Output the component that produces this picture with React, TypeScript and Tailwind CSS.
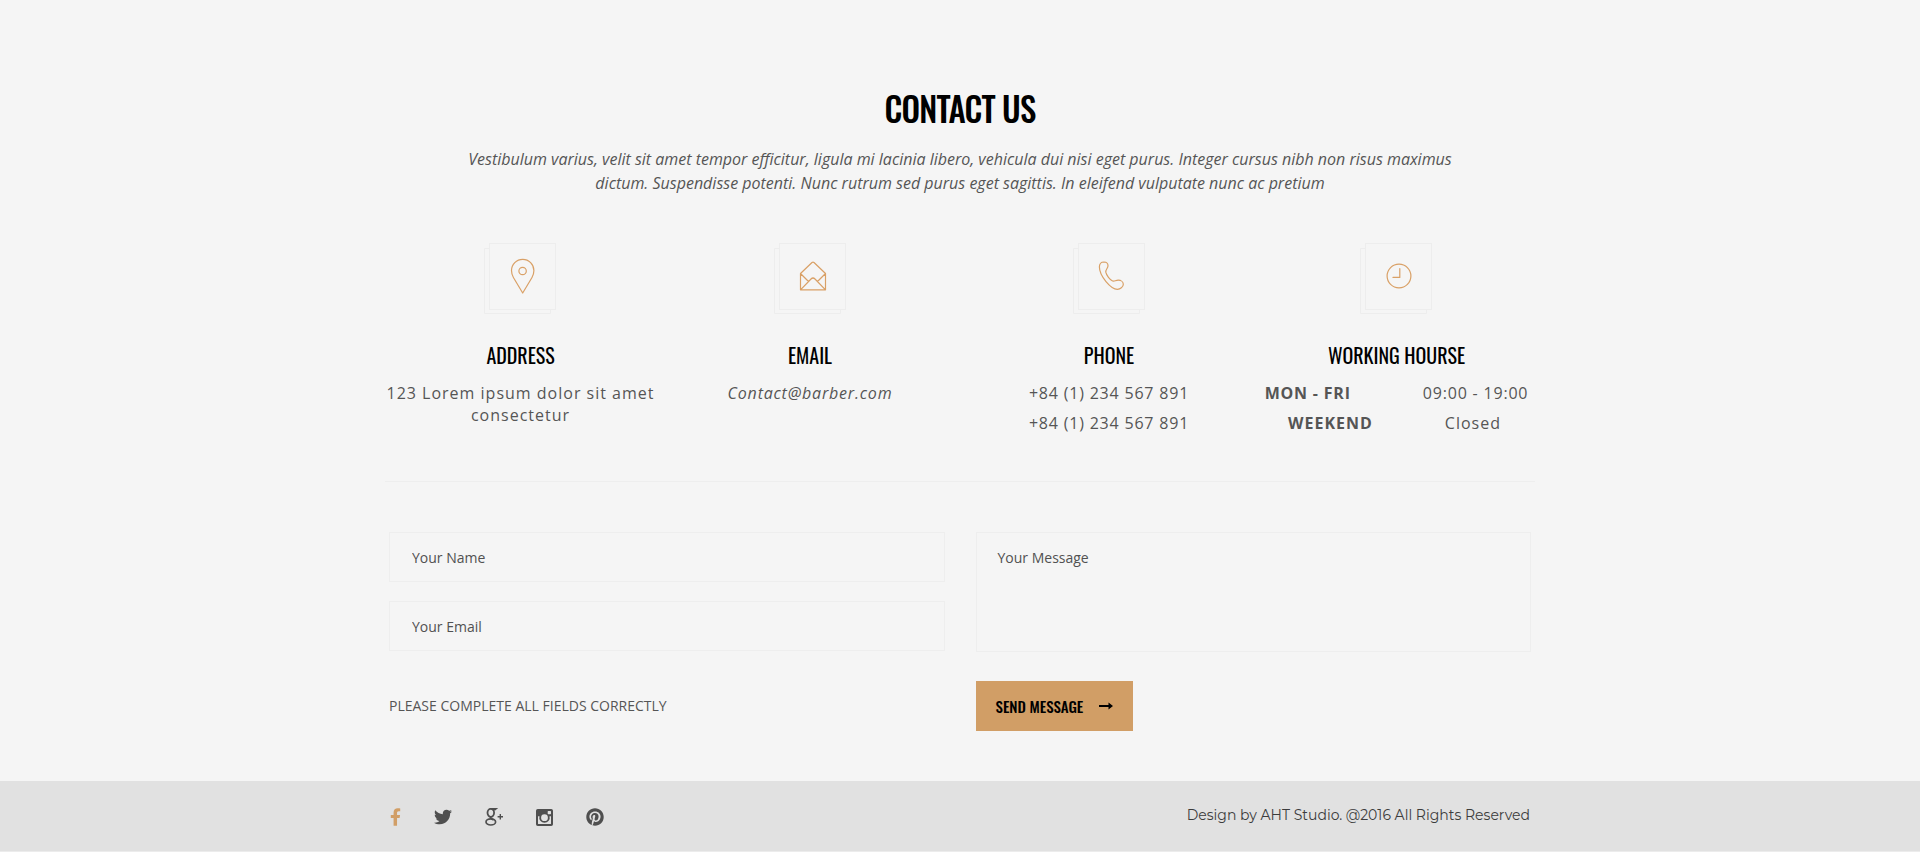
import type { ReactNode } from "react";
import { FaFacebookF, FaPinterest, FaTwitter } from "react-icons/fa";

const display = "font-['Oswald','Liberation_Sans_Narrow',sans-serif]";

function IconTile({ children }: { children: ReactNode }) {
  return (
    <svg width="73" height="72" viewBox="0 0 73 72" fill="none" aria-hidden="true">
      <rect x="5.5" y="0.5" width="66" height="66" stroke="#ededed" />
      <path d="M5 5.5H0.5V70.5H66.5V67" stroke="#ededed" />
      <g stroke="#d9a066" strokeWidth="1.2" strokeLinejoin="round" strokeLinecap="round">
        {children}
      </g>
    </svg>
  );
}

function GooglePlus() {
  return (
    <svg width="18" height="18" viewBox="0 0 18 18" fill="none" aria-hidden="true">
      <ellipse cx="5.8" cy="4.8" rx="3.3" ry="4" stroke="#4f4f4f" strokeWidth="1.8" />
      <path d="M6 .6H11.5L10 1.8H7.5" stroke="#4f4f4f" strokeWidth="1.2" />
      <path d="M6.2 8.8C4.8 10 6 10.6 8.6 11.9" stroke="#4f4f4f" strokeWidth="1.8" />
      <ellipse cx="5.8" cy="13.9" rx="4.8" ry="3.1" stroke="#4f4f4f" strokeWidth="1.7" />
      <path d="M15.3 6V11.4M12.6 8.7H18" stroke="#4f4f4f" strokeWidth="1.4" />
    </svg>
  );
}

function Instagram() {
  return (
    <svg width="17" height="17" viewBox="0 0 17 17" aria-hidden="true">
      <path
        fill="#4f4f4f"
        fillRule="evenodd"
        d="M1.8 0H15.2A1.8 1.8 0 0 1 17 1.8V15.2A1.8 1.8 0 0 1 15.2 17H1.8A1.8 1.8 0 0 1 0 15.2V1.8A1.8 1.8 0 0 1 1.8 0ZM12.3 2A.6.6 0 0 0 11.7 2.6V4.6A.6.6 0 0 0 12.3 5.2H14.4A.6.6 0 0 0 15 4.6V2.6A.6.6 0 0 0 14.4 2ZM2 7.2V14.4A.6.6 0 0 0 2.6 15H14.4A.6.6 0 0 0 15 14.4V7.2H13.5A5.2 5.2 0 1 1 3.5 7.2ZM8.5 5.3A3.4 3.4 0 1 0 8.5 12.1A3.4 3.4 0 1 0 8.5 5.3Z"
      />
    </svg>
  );
}

function Info({ title, icon, children }: { title: string; icon: ReactNode; children: ReactNode }) {
  return (
    <div className="flex flex-col items-center text-center">
      <IconTile>{icon}</IconTile>
      <h3 className={`${display} mt-6 text-xl leading-8 font-normal text-black`}>{title}</h3>
      <div className="mt-[11px] text-base tracking-wider">{children}</div>
    </div>
  );
}

const field =
  "w-full border border-[#eeeeee] bg-transparent text-sm text-[#515151] placeholder:text-[#515151] placeholder:opacity-100 outline-none";

export default function App() {
  return (
    <div className="min-h-screen bg-[#f5f5f5] font-['Open_Sans',sans-serif] text-[#555555]">
      <main className="mx-auto max-w-[1150px] pt-[79px]">
        <header className="mx-auto max-w-[1000px] text-center">
          <h2 className={`${display} text-[33px] leading-[60px] font-medium tracking-tight text-black`}>CONTACT US</h2>
          <p className="mt-2 text-base leading-6 italic">
            Vestibulum varius, velit sit amet tempor efficitur, ligula mi lacinia libero, vehicula dui nisi eget purus.
            Integer cursus nibh non risus maximus dictum. Suspendisse potenti. Nunc rutrum sed purus eget sagittis. In
            eleifend vulputate nunc ac pretium
          </p>
        </header>

        <section className="mt-12 grid grid-cols-[279fr_292fr_306fr_273fr] border-b border-[#eeeeee] pb-[47px]">
          <div className="pr-2">
            <Info
              title="ADDRESS"
              icon={
                <>
                  <path d="M38.7 50L29.4 34.5C28.2 32.4 27.5 30 27.5 27.6A11.2 11.2 0 0 1 49.9 27.6C49.9 30 49.2 32.4 48 34.5Z" />
                  <circle cx="38.6" cy="28" r="3.7" />
                </>
              }
            >
              <p className="leading-[22px] tracking-[1px]">123 Lorem ipsum dolor sit amet consectetur</p>
            </Info>
          </div>
          <Info
            title="EMAIL"
            icon={
              <path d="M26.5 30.5L38 19.5Q39 18.7 40 19.5L51.5 30.5V46.8H26.5ZM26.5 30.5L34.5 38.5M51.5 30.5L43.5 38.5M26.5 46.8L37 36Q39 34 41 36L51.5 46.8" />
            }
          >
            <a href="mailto:Contact@barber.com" className="block leading-[22px] italic">
              Contact@barber.com
            </a>
          </Info>
          <Info
            title="PHONE"
            icon={
              <path d="M26.4 24C26.4 21 28.4 19 31 19C33.4 19.1 35 20.9 35 22.8C35 25.3 32.4 26.6 32.8 29.2C33.4 32.2 37 36.8 39.6 38C41.6 38.6 42.6 37.2 45.2 37.2C48 37.2 50.3 39 50.3 41.2C50.3 44 47.2 46.3 44.4 46.3C38 46.3 26.4 33 26.4 24Z" />
            }
          >
            <p className="leading-[22px]">+84 (1) 234 567 891</p>
            <p className="mt-2 leading-[22px]">+84 (1) 234 567 891</p>
          </Info>
          <div className="pr-1">
            <Info
              title="WORKING HOURSE"
              icon={
                <>
                  <circle cx="39" cy="33" r="11.9" />
                  <path d="M39.8 25.5V34.4H33" />
                </>
              }
            >
              <dl className="leading-[22px] whitespace-nowrap">
                <div className="flex justify-center gap-[72px]">
                  <dt className="font-bold">MON - FRI</dt>
                  <dd>09:00 - 19:00</dd>
                </div>
                <div className="mt-2 flex justify-center gap-[72px] pr-1 tracking-[1px]">
                  <dt className="font-bold">WEEKEND</dt>
                  <dd>Closed</dd>
                </div>
              </dl>
            </Info>
          </div>
        </section>

        <form className="mx-auto mt-[50px] grid max-w-[1142px] grid-cols-2 gap-x-[31px]" onSubmit={(e) => e.preventDefault()}>
          <div>
            <input aria-label="Your Name" placeholder="Your Name" className={`${field} block h-[50px] px-[22px]`} />
            <input type="email" aria-label="Your Email" placeholder="Your Email" className={`${field} mt-[19px] block h-[50px] px-[22px]`} />
          </div>
          <textarea aria-label="Your Message" placeholder="Your Message" className={`${field} block h-[120px] resize-none px-[21px] py-[15px]`} />
          <p className="mt-[29px] text-sm leading-[50px]">PLEASE COMPLETE ALL FIELDS CORRECTLY</p>
          <div className="mt-[29px]">
            <button
              type="submit"
              className={`${display} flex h-[50px] items-center gap-4 bg-[#d19e66] px-5 text-[15px] font-medium text-black`}
            >
              SEND MESSAGE
              <svg width="14" height="8" viewBox="0 0 14 8" aria-hidden="true">
                <path d="M0 3H9.5V0.6L14 4L9.5 7.4V5H0Z" />
              </svg>
            </button>
          </div>
        </form>
      </main>

      <footer className="mt-[50px] border-b border-[#ececec] bg-[#e1e1e1]">
        <div className="mx-auto flex h-[70px] max-w-[1140px] items-center justify-between">
          <nav className="flex items-center gap-[33px] pt-0.5 text-[#4f4f4f]">
            <a href="#facebook" aria-label="Facebook" className="text-[#d19e66]">
              <FaFacebookF className="h-[18px] w-[11px]" />
            </a>
            <a href="#twitter" aria-label="Twitter">
              <FaTwitter className="size-[18px]" />
            </a>
            <a href="#google-plus" aria-label="Google Plus">
              <GooglePlus />
            </a>
            <a href="#instagram" aria-label="Instagram">
              <Instagram />
            </a>
            <a href="#pinterest" aria-label="Pinterest">
              <FaPinterest className="size-[18px]" />
            </a>
          </nav>
          <p className="pb-0.5 font-['Montserrat',sans-serif] text-sm text-[#3c3c3c]">
            Design by AHT Studio. @2016 All Rights Reserved
          </p>
        </div>
      </footer>
    </div>
  );
}
